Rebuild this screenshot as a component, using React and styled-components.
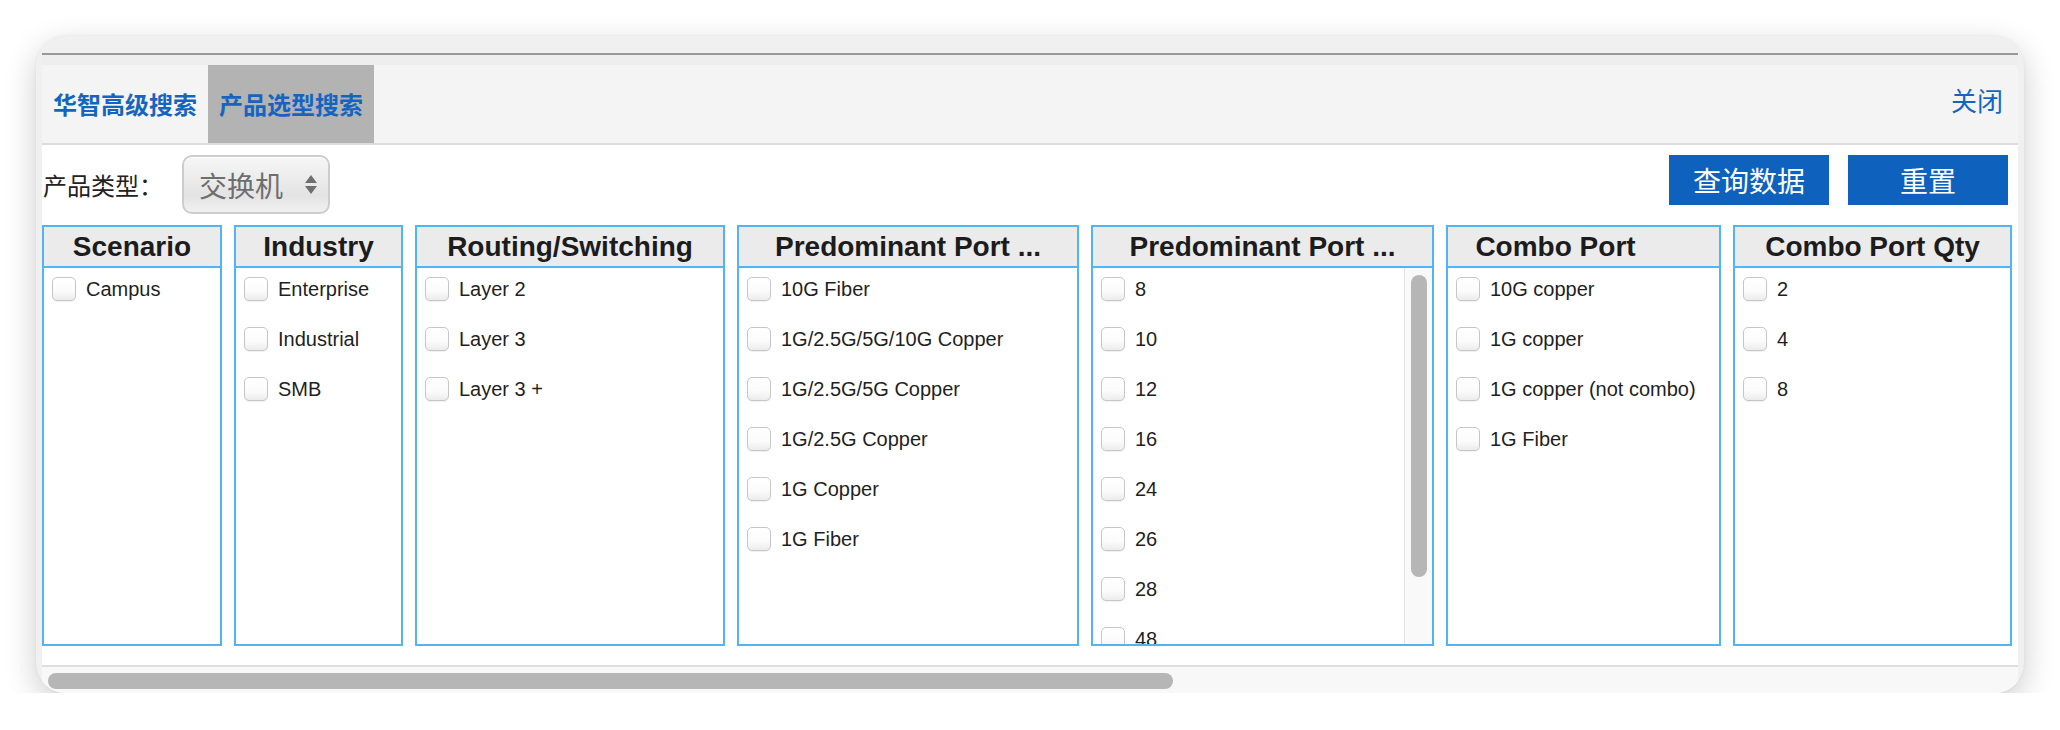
import React from "react";
import styled, { createGlobalStyle } from "styled-components";

const GlobalStyle = createGlobalStyle`
  html, body { margin: 0; padding: 0; background: #ffffff; }
  body {
    font-family: "Liberation Sans", "Noto Sans CJK SC", Arial, sans-serif;
    color: #1f1f1f;
  }
  * { box-sizing: border-box; }
`;

const CJK = `"Noto Sans CJK SC", "Liberation Sans", sans-serif`;

const Window = styled.div`
  margin: 36px 0 0 36px;
  width: 1988px;
  height: 657px;
  border-radius: 30px;
  background: #f0f0f0;
  overflow: hidden;
  padding: 17px 6px 0 6px;
  box-shadow: 0 10px 32px rgba(0, 0, 0, 0.2), 0 0 3px rgba(0, 0, 0, 0.06);
  display: flex;
`;

const Page = styled.div`
  flex: 1;
  display: flex;
  flex-direction: column;
  background: #ffffff;
  border-top: 2px solid #999999;
`;

const TitleGap = styled.div`
  height: 10px;
  background: #eeeeee;
`;

const TabBar = styled.div`
  height: 80px;
  display: flex;
  align-items: center;
  background: #f4f4f4;
  border-bottom: 2px solid #dcdcdc;
  padding-right: 15px;
`;

const Tab = styled.div`
  height: 78px;
  padding: 0 11px;
  display: flex;
  align-items: center;
  font-family: ${CJK};
  font-weight: 700;
  font-size: 24px;
  line-height: 24px;
  color: #1565c0;
  background: ${(p) => (p.$active ? "#b3b3b3" : "transparent")};
  white-space: nowrap;
`;

const Close = styled.div`
  margin-left: auto;
  padding-bottom: 8px;
  font-family: ${CJK};
  font-size: 26px;
  line-height: 26px;
  color: #1565c0;
`;

const Toolbar = styled.div`
  height: 80px;
  display: flex;
  align-items: flex-start;
  justify-content: space-between;
  padding: 10px 10px 0 1px;
`;

const Field = styled.div`
  display: flex;
  align-items: center;
  height: 59px;
`;

const Label = styled.span`
  font-family: ${CJK};
  font-size: 24px;
  line-height: 24px;
  color: #222222;
  margin-right: 19px;
`;

const Select = styled.div`
  width: 148px;
  height: 59px;
  border: 2px solid #cdcdcd;
  border-radius: 10px;
  background: linear-gradient(
    to bottom,
    #f6f6f6 0%,
    #ececec 40%,
    #e3e3e3 70%,
    #f1f1f1 100%
  );
  box-shadow: inset 0 1px 0 #ffffff;
  display: flex;
  align-items: center;
  justify-content: space-between;
  padding: 0 11px 0 15px;
  font-family: ${CJK};
  font-size: 28px;
  line-height: 28px;
  color: #6e6e6e;
`;

const Actions = styled.div`
  display: flex;
  gap: 19px;
`;

const Button = styled.button`
  width: 160px;
  height: 50px;
  border: none;
  margin: 0;
  padding: 0;
  background: #0e62be;
  color: #ffffff;
  font-family: ${CJK};
  font-size: 28px;
  line-height: 28px;
  cursor: pointer;
`;

const Columns = styled.div`
  height: 421px;
  display: flex;
  gap: 12px;
`;

const Column = styled.div`
  width: ${(p) => p.$w}px;
  flex: none;
  border: 2px solid #52b4f0;
  display: flex;
  flex-direction: column;
  overflow: hidden;
`;

const Header = styled.div`
  height: 41px;
  flex: none;
  background: #ebebeb;
  border-bottom: 2px solid #52b4f0;
  font-family: "Liberation Sans", Arial, sans-serif;
  font-weight: 700;
  font-size: 28px;
  line-height: 39px;
  color: #1c1c1c;
  text-align: center;
  white-space: nowrap;
  overflow: hidden;
  padding-right: ${(p) => p.$shift || 0}px;
`;

const Body = styled.div`
  flex: 1;
  display: flex;
  overflow: hidden;
`;

const List = styled.div`
  flex: 1;
  padding: 9px 8px 0 8px;
  overflow: hidden;
`;

const Item = styled.label`
  display: flex;
  align-items: center;
  height: 24px;
  margin-bottom: 26px;
  font-size: 20px;
  line-height: 24px;
  color: #1f1f1f;
  white-space: nowrap;
`;

const Check = styled.input.attrs({ type: "checkbox" })`
  appearance: none;
  -webkit-appearance: none;
  flex: none;
  width: 24px;
  height: 24px;
  margin: 0 10px 0 0;
  border: 1px solid #c6c6c6;
  border-radius: 5px;
  background: linear-gradient(to bottom, #ffffff 0%, #fbfbfb 60%, #ececec 100%);
  box-shadow: 0 1px 1px rgba(0, 0, 0, 0.06);
`;

const VTrack = styled.div`
  width: 28px;
  flex: none;
  background: #f9f9f9;
  border-left: 1px solid #e2e2e2;
  padding: 7px 5px 0 6px;
`;

const VThumb = styled.div`
  width: 16px;
  height: 302px;
  border-radius: 8px;
  background: #b6b6b6;
`;

const Spacer = styled.div`
  flex: 1;
`;

const HTrack = styled.div`
  height: 28px;
  flex: none;
  background: #f8f8f8;
  border-top: 2px solid #dedede;
  padding: 6px 0 0 6px;
`;

const HThumb = styled.div`
  width: 1125px;
  height: 16px;
  border-radius: 8px;
  background: #b6b6b6;
`;

const Arrows = () => (
  <svg width="12" height="20" viewBox="0 0 12 20" aria-hidden="true">
    <polygon points="0,8 6,0 12,8" fill="#6f6f6f" />
    <polygon points="0,11 12,11 6,19" fill="#6f6f6f" />
  </svg>
);

const columns = [
  { title: "Scenario", w: 180, items: ["Campus"] },
  { title: "Industry", w: 169, items: ["Enterprise", "Industrial", "SMB"] },
  { title: "Routing/Switching", w: 310, items: ["Layer 2", "Layer 3", "Layer 3 +"] },
  {
    title: "Predominant Port ...",
    w: 342,
    items: [
      "10G Fiber",
      "1G/2.5G/5G/10G Copper",
      "1G/2.5G/5G Copper",
      "1G/2.5G Copper",
      "1G Copper",
      "1G Fiber",
    ],
  },
  {
    title: "Predominant Port ...",
    w: 343,
    scroll: true,
    items: ["8", "10", "12", "16", "24", "26", "28", "48"],
  },
  {
    title: "Combo Port",
    w: 275,
    shift: 56,
    items: ["10G copper", "1G copper", "1G copper (not combo)", "1G Fiber"],
  },
  { title: "Combo Port Qty", w: 279, items: ["2", "4", "8"] },
];

export default function App() {
  return (
    <>
      <GlobalStyle />
      <Window>
        <Page>
          <TitleGap />
          <TabBar>
            <Tab>华智高级搜索</Tab>
            <Tab $active>产品选型搜索</Tab>
            <Close>关闭</Close>
          </TabBar>
          <Toolbar>
            <Field>
              <Label>产品类型：</Label>
              <Select>
                <span>交换机</span>
                <Arrows />
              </Select>
            </Field>
            <Actions>
              <Button>查询数据</Button>
              <Button>重置</Button>
            </Actions>
          </Toolbar>
          <Columns>
            {columns.map((c, i) => (
              <Column key={i} $w={c.w}>
                <Header $shift={c.shift}>{c.title}</Header>
                <Body>
                  <List>
                    {c.items.map((it) => (
                      <Item key={it}>
                        <Check />
                        {it}
                      </Item>
                    ))}
                  </List>
                  {c.scroll && (
                    <VTrack>
                      <VThumb />
                    </VTrack>
                  )}
                </Body>
              </Column>
            ))}
          </Columns>
          <Spacer />
          <HTrack>
            <HThumb />
          </HTrack>
        </Page>
      </Window>
    </>
  );
}
